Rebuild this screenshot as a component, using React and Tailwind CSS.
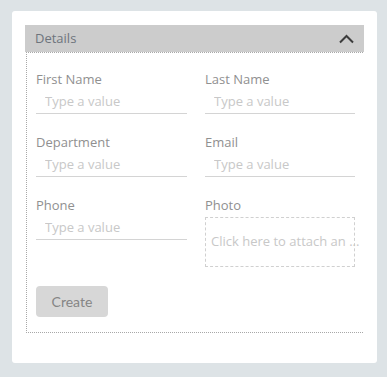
import React from 'react';

const Field = ({ label }) => (
  <div className="flex flex-col">
    <label className="h-[18px] leading-[18px] text-[13px] text-[#909090]">{label}</label>
    <input
      type="text"
      placeholder="Type a value"
      className="h-[26px] border-b border-[#d4d4d4] pl-[9px] text-[13px] outline-none placeholder:text-[#c8c8c8]"
    />
  </div>
);

const App = () => {
  return (
    <div
      className="w-full h-[377px] bg-[#dde3e6] pt-[11px] pl-[12px] pr-[10px]"
      style={{ fontFamily: '"Open Sans", "Liberation Sans", sans-serif' }}
    >
      <div className="w-[365px] h-[352px] bg-white rounded-[3px] px-[13px] pt-[14px]">
        {/* Header */}
        <div className="h-[27px] bg-[#cccccc] flex items-center justify-between pl-[10px] pr-[10px]">
          <span className="text-[13px] text-[#6e747c]">Details</span>
          <svg width="15" height="10" viewBox="0 0 15 10" fill="none">
            <polyline points="1,8.5 7.5,2 14,8.5" stroke="#3c3c3c" strokeWidth="2" />
          </svg>
        </div>

        {/* Body */}
        <div className="mx-[1px] border-t border-l border-b border-dotted border-[#a8a8a8] pl-[9px] pr-[8px] pt-[17px] pb-[15px]">
          <div className="grid grid-cols-[151px_150px] gap-x-[18px] gap-y-[19px]">
            <Field label="First Name" />
            <Field label="Last Name" />
            <Field label="Department" />
            <Field label="Email" />
            <Field label="Phone" />
            <div className="flex flex-col">
              <label className="h-[18px] leading-[18px] text-[13px] text-[#909090]">Photo</label>
              <div className="mt-[3px] h-[50px] border border-dashed border-[#d0d0d0] flex items-center pl-[5px]">
                <span className="text-[13px] text-[#c8c8c8] whitespace-nowrap">Click here to attach an ...</span>
              </div>
            </div>
          </div>

          <button
            className="mt-[19px] w-[72px] h-[31px] bg-[#d7d7d7] rounded-[4px] text-[14px] text-[#858585]"
            style={{ fontFamily: 'Lato, "Open Sans", sans-serif' }}
          >
            Create
          </button>
        </div>
      </div>
    </div>
  );
};

export default App;
